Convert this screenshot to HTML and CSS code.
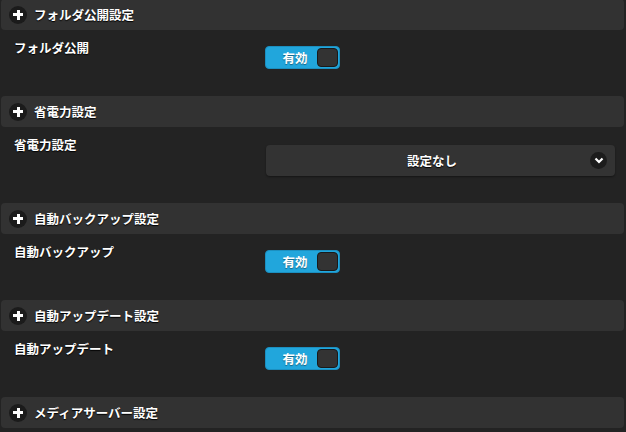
FILE: index.html
```html
<!DOCTYPE html>
<html lang="ja">
<head>
    <meta charset="UTF-8">
    <title>設定</title>
    <link rel="stylesheet" href="styles.css">
</head>
<body>
<div class="settings">
    <div class="group-head"><span class="plus"></span>フォルダ公開設定</div>
    <div class="group-body">
        <div class="row">
            <div class="label">フォルダ公開</div>
            <div class="toggle"><span class="toggle-text">有効</span><span class="knob"></span></div>
        </div>
    </div>

    <div class="group-head"><span class="plus"></span>省電力設定</div>
    <div class="group-body tall">
        <div class="row">
            <div class="label">省電力設定</div>
            <div class="select">
                <span class="select-text">設定なし</span>
                <span class="chevron">
                    <svg width="10" height="7" viewBox="0 0 10 7"><path d="M1.5 1.5 L5 5 L8.5 1.5" fill="none" stroke="#fff" stroke-width="2.2"/></svg>
                </span>
            </div>
        </div>
    </div>

    <div class="group-head"><span class="plus"></span>自動バックアップ設定</div>
    <div class="group-body">
        <div class="row">
            <div class="label">自動バックアップ</div>
            <div class="toggle"><span class="toggle-text">有効</span><span class="knob"></span></div>
        </div>
    </div>

    <div class="group-head"><span class="plus"></span>自動アップデート設定</div>
    <div class="group-body">
        <div class="row">
            <div class="label">自動アップデート</div>
            <div class="toggle"><span class="toggle-text">有効</span><span class="knob"></span></div>
        </div>
    </div>

    <div class="group-head"><span class="plus"></span>メディアサーバー設定</div>
</div>
</body>
</html>
```
FILE: styles.css
```css
body {
    margin: 0;
    padding: 0;
    background-color: #232323;
    font-family: "Noto Sans CJK JP", "Noto Sans", sans-serif;
    font-weight: bold;
    font-size: 12.5px;
    color: #fff;
    overflow: hidden;
}
.settings {
    margin: -1px 2px 0 1px;
}
.group-head {
    height: 31px;
    display: flex;
    align-items: center;
    background-color: #323232;
    border-radius: 4px;
    padding-left: 8px;
    text-shadow: 0 1px 1px #000;
}
.plus {
    position: relative;
    width: 18px;
    height: 18px;
    border-radius: 50%;
    background-color: #1b1b1b;
    margin-right: 7px;
}
.plus::before,
.plus::after {
    content: "";
    position: absolute;
    background-color: #fff;
    left: 4px;
    top: 7.5px;
    width: 10px;
    height: 3px;
}
.plus::after {
    left: 7.5px;
    top: 4px;
    width: 3px;
    height: 10px;
}
.group-body {
    height: 66px;
    padding: 8px 0 0 13px;
    box-sizing: border-box;
}
.group-body.tall {
    height: 76px;
}
.row {
    display: flex;
    align-items: flex-start;
}
.label {
    width: 251px;
    line-height: 20px;
    text-shadow: 0 1px 1px #000;
}
.toggle {
    margin-top: 8px;
    width: 75px;
    height: 23px;
    box-sizing: border-box;
    display: flex;
    align-items: center;
    background-color: #21a6dc;
    border: 1px solid #1b8fc0;
    border-radius: 4px;
    padding: 1px;
}
.toggle-text {
    flex: 1;
    text-align: center;
    padding-left: 6px;
    font-size: 12.5px;
    text-shadow: 0 1px 1px rgba(0, 0, 0, 0.4);
}
.knob {
    width: 21px;
    height: 19px;
    background-color: #333;
    border: 1px solid #1a1a1a;
    border-radius: 4px;
    box-sizing: border-box;
}
.select {
    margin-top: 10px;
    margin-left: 1px;
    width: 349px;
    height: 31px;
    display: flex;
    align-items: center;
    background-color: #333;
    border-radius: 4px;
    box-shadow: 0 1px 2px rgba(0, 0, 0, 0.4);
    padding-right: 8px;
    box-sizing: border-box;
}
.select-text {
    flex: 1;
    text-align: center;
    padding-left: 8px;
    text-shadow: 0 1px 1px #000;
}
.chevron {
    width: 17px;
    height: 17px;
    border-radius: 50%;
    background-color: #1c1c1c;
    display: flex;
    align-items: center;
    justify-content: center;
}
```
